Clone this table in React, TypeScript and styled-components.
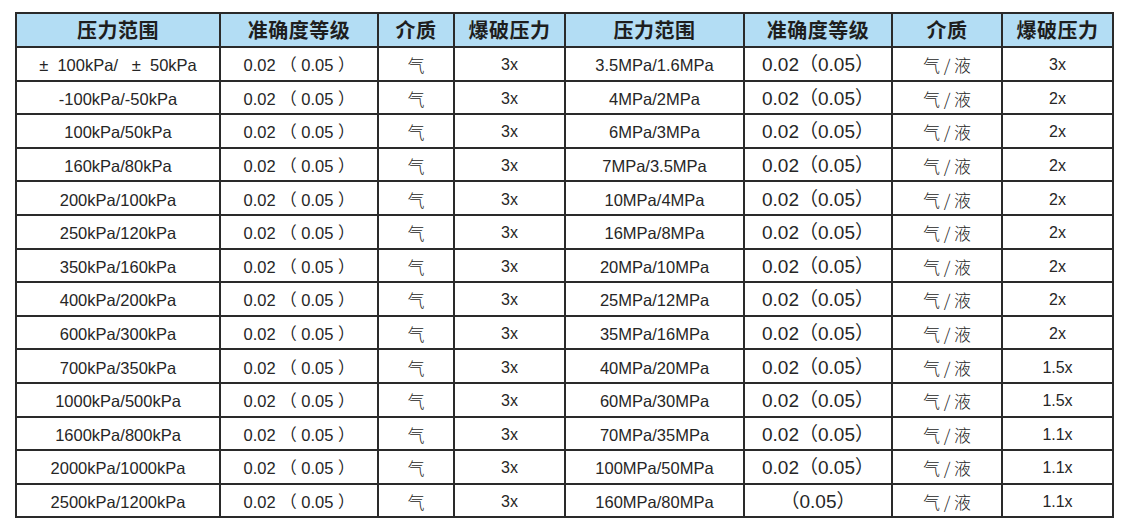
import styled, {createGlobalStyle} from "styled-components";
import {FC} from "react";

const GlobalStyle = createGlobalStyle`
    html, body {
        margin: 0;
        padding: 0;
        background: #fff;
    }
`

type Row = [string, string, string, string, string, string, string, string];

const rows: Row[] = [
    ["±  100kPa/   ±  50kPa", "0.02 （ 0.05 ）", "气", "3x", "3.5MPa/1.6MPa", "0.02（0.05）", "气 / 液", "3x"],
    ["-100kPa/-50kPa", "0.02 （ 0.05 ）", "气", "3x", "4MPa/2MPa", "0.02（0.05）", "气 / 液", "2x"],
    ["100kPa/50kPa", "0.02 （ 0.05 ）", "气", "3x", "6MPa/3MPa", "0.02（0.05）", "气 / 液", "2x"],
    ["160kPa/80kPa", "0.02 （ 0.05 ）", "气", "3x", "7MPa/3.5MPa", "0.02（0.05）", "气 / 液", "2x"],
    ["200kPa/100kPa", "0.02 （ 0.05 ）", "气", "3x", "10MPa/4MPa", "0.02（0.05）", "气 / 液", "2x"],
    ["250kPa/120kPa", "0.02 （ 0.05 ）", "气", "3x", "16MPa/8MPa", "0.02（0.05）", "气 / 液", "2x"],
    ["350kPa/160kPa", "0.02 （ 0.05 ）", "气", "3x", "20MPa/10MPa", "0.02（0.05）", "气 / 液", "2x"],
    ["400kPa/200kPa", "0.02 （ 0.05 ）", "气", "3x", "25MPa/12MPa", "0.02（0.05）", "气 / 液", "2x"],
    ["600kPa/300kPa", "0.02 （ 0.05 ）", "气", "3x", "35MPa/16MPa", "0.02（0.05）", "气 / 液", "2x"],
    ["700kPa/350kPa", "0.02 （ 0.05 ）", "气", "3x", "40MPa/20MPa", "0.02（0.05）", "气 / 液", "1.5x"],
    ["1000kPa/500kPa", "0.02 （ 0.05 ）", "气", "3x", "60MPa/30MPa", "0.02（0.05）", "气 / 液", "1.5x"],
    ["1600kPa/800kPa", "0.02 （ 0.05 ）", "气", "3x", "70MPa/35MPa", "0.02（0.05）", "气 / 液", "1.1x"],
    ["2000kPa/1000kPa", "0.02 （ 0.05 ）", "气", "3x", "100MPa/50MPa", "0.02（0.05）", "气 / 液", "1.1x"],
    ["2500kPa/1200kPa", "0.02 （ 0.05 ）", "气", "3x", "160MPa/80MPa", "（0.05）", "气 / 液", "1.1x"],
];

const headers = ["压力范围", "准确度等级", "介质", "爆破压力", "压力范围", "准确度等级", "介质", "爆破压力"];
const widths = [204, 158, 76, 111, 179, 148, 110, 111];

type CellKind = "num" | "big" | "cjk" | "small";

// what kind of text sits in each column
const kinds: CellKind[] = ["num", "num", "cjk", "small", "num", "big", "cjk", "small"];

const App: FC = () => (<Page>
    <GlobalStyle/>
    <Table>
        <colgroup>
            {widths.map((w, i) => <col key={i} style={{width: w}}/>)}
        </colgroup>
        <thead>
        <tr>
            {headers.map((h, i) => <HeadCell key={i}>{h}</HeadCell>)}
        </tr>
        </thead>
        <tbody>
        {rows.map((r, ri) => <BodyRow key={ri}>
            {r.map((c, ci) => <Cell key={ci} $kind={kinds[ci]}>{c}</Cell>)}
        </BodyRow>)}
        </tbody>
    </Table>
</Page>)

export default App

const Page = styled.div`
    padding: 12px 0 0 15px;
`

const Table = styled.table`
    border-collapse: collapse;
    table-layout: fixed;
    width: 1098px;
    color: #262626;
`

const HeadCell = styled.th`
    height: 32px;
    padding: 0;
    background: #b3ddf4;
    border: 2px solid #2a2a2a;
    font-family: "Noto Sans CJK SC", sans-serif;
    font-size: 20px;
    font-weight: 700;
    letter-spacing: 0.5px;
    line-height: 1;
    text-align: center;
    vertical-align: middle;
    color: #1e1e1e;
`

const BodyRow = styled.tr`
    height: 33.6px;
`

const sizes: Record<CellKind, string> = {
    num: "16.5px",
    big: "19px",
    cjk: "17px",
    small: "16px",
}

const Cell = styled.td<{ $kind: CellKind }>`
    padding: 3px 0 0;
    border: 2px solid #2a2a2a;
    font-family: ${p => p.$kind === "cjk"
            ? `"Noto Sans CJK SC", sans-serif`
            : `"Liberation Sans", "Noto Sans CJK SC", sans-serif`};
    font-weight: ${p => p.$kind === "cjk" ? 300 : 400};
    font-size: ${p => sizes[p.$kind]};
    line-height: 20px;
    text-align: center;
    vertical-align: middle;
    white-space: pre;
`
